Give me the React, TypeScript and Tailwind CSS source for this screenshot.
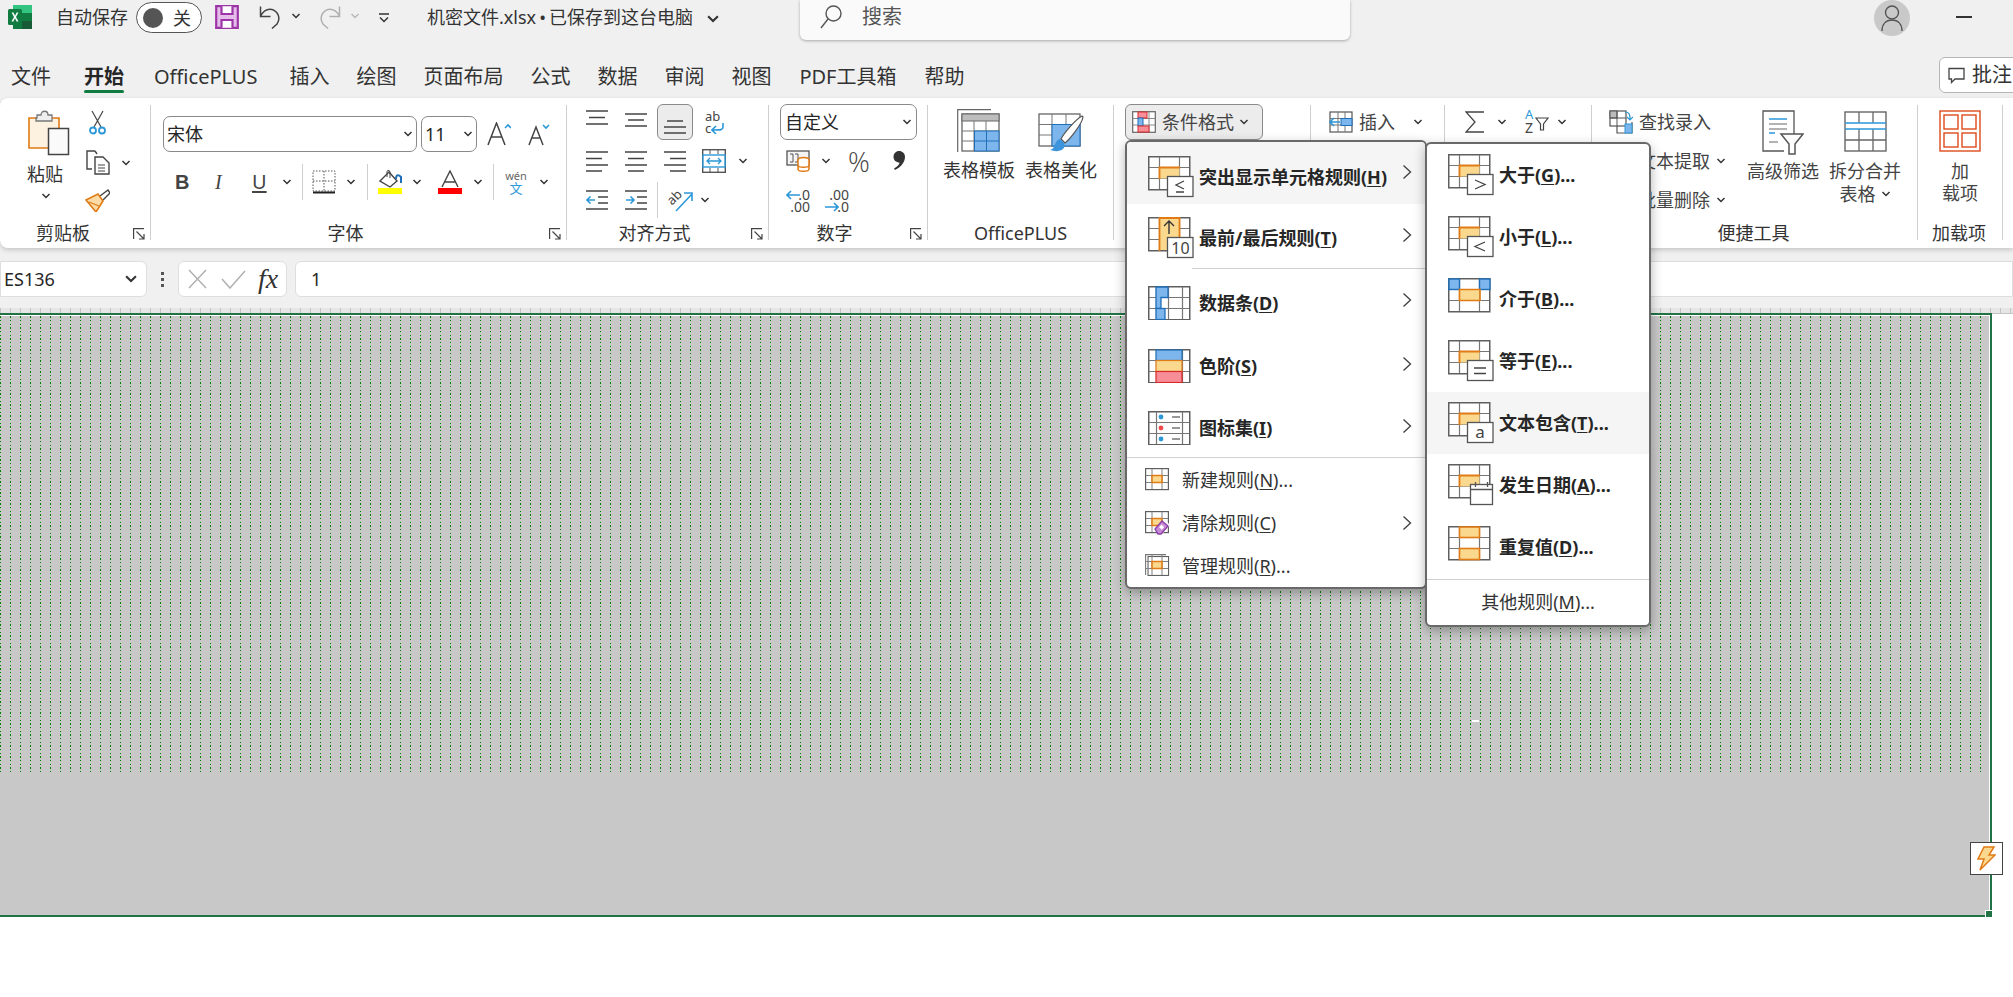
import type { ReactNode } from 'react'

const FONT = "font-['Noto_Sans','Noto_Sans_CJK_SC',sans-serif]"

// --- small shared bits ---
function Chev({ className = '', size = 8, color = '#333' }: { className?: string; size?: number; color?: string }) {
  return (
    <svg className={`shrink-0 ${className}`} width={size + 2} height={size} viewBox="0 0 10 8" fill="none">
      <path d="M1.5 2 5 5.5 8.5 2" stroke={color} strokeWidth="1.5" />
    </svg>
  )
}

function Launcher({ className = '' }: { className?: string }) {
  return (
    <svg className={className} width="12" height="12" viewBox="0 0 12 12" fill="none" stroke="#444" strokeWidth="1.2">
      <path d="M11 .6H.6V11" />
      <path d="M3.5 3.5 11 11M11 6v5H6" />
    </svg>
  )
}

function Sep({ className = '' }: { className?: string }) {
  return <div className={`w-px bg-[#cfcfcf] shrink-0 ${className}`} />
}

function GroupLabel({ children, launcher }: { children: ReactNode; launcher?: boolean }) {
  return (
    <div className="relative h-[18px] flex items-start justify-center text-[18px] leading-[22px] text-[#333] whitespace-nowrap">
      {children}
      {launcher && <Launcher className="absolute right-[5px] bottom-0" />}
    </div>
  )
}

function Lines({ kind }: { kind: 'top' | 'mid' | 'bottom' | 'left' | 'center' | 'right' | 'out' | 'in' }) {
  if (kind === 'top' || kind === 'mid' || kind === 'bottom') {
    const d = kind === 'top' ? 'M0 1H22M3 7.5H19M0 14H22' : kind === 'mid' ? 'M0 4H22M3 10H19M0 16H22' : 'M3 5H19M0 11H22M0 17H22'
    return (
      <svg width="22" height="20" viewBox="0 0 22 20" stroke="#444" strokeWidth="1.4">
        <path d={d} />
      </svg>
    )
  }
  if (kind === 'out' || kind === 'in') {
    return (
      <svg width="22" height="20" viewBox="0 0 22 20" fill="none">
        <path d="M0 1H22M12 7H22M12 13H22M0 19H22" stroke="#444" strokeWidth="1.4" />
        <path d={kind === 'out' ? 'M9 10H1M4.5 6.5 1 10l3.5 3.5' : 'M1 10H9M5.5 6.5 9 10l-3.5 3.5'} stroke="#2d98d8" strokeWidth="1.6" />
      </svg>
    )
  }
  const d =
    kind === 'left'
      ? 'M0 1H22M0 7.5H16M0 14H22M0 20H16'
      : kind === 'center'
        ? 'M0 1H22M3 7.5H19M0 14H22M3 20H19'
        : 'M0 1H22M6 7.5H22M0 14H22M6 20H22'
  return (
    <svg width="22" height="21" viewBox="0 0 22 21" stroke="#444" strokeWidth="1.4">
      <path d={d} />
    </svg>
  )
}

// --- grid icons of the conditional format menu ---
const ORANGE = '#e07b16'
const AMBER = '#fad98f'
const BLUE = '#7db6ec'
const DEEPBLUE = '#1f6fb8'

function CfIcon({ children }: { children: ReactNode }) {
  return (
    <svg className="shrink-0" width="46" height="42" viewBox="0 0 46 42" fill="none">
      {children}
    </svg>
  )
}

function Grid({ cols = 'M11.5 1V33M31.5 1V33' }: { cols?: string }) {
  return (
    <>
      <rect x=".75" y=".75" width="41" height="33" fill="#fff" stroke="#5f5f5f" strokeWidth="1.5" />
      <path d={`${cols}M1 11.5H41M1 22.5H41`} stroke="#767676" strokeWidth="1.2" />
    </>
  )
}

function Cell() {
  return (
    <>
      <rect x="11.5" y="11.5" width="20" height="11" fill={AMBER} />
      <path d="M11.5 23V11.5H32" stroke={ORANGE} strokeWidth="1.8" />
    </>
  )
}

function Badge({ children }: { children: ReactNode }) {
  return (
    <>
      <rect x="19.5" y="20.5" width="25.5" height="20" fill="#fff" stroke="#555" strokeWidth="1.3" />
      {children}
    </>
  )
}

function GreaterIcon() {
  return (
    <CfIcon>
      <Grid />
      <Cell />
      <Badge>
        <path d="M27 26 37 30.5 27 35" stroke="#444" strokeWidth="1.3" />
      </Badge>
    </CfIcon>
  )
}
function LessIcon({ eq }: { eq?: boolean }) {
  return (
    <CfIcon>
      <Grid />
      <Cell />
      <Badge>
        {eq ? (
          <path d="M36 25 28 29 36 33M28 36H36" stroke="#444" strokeWidth="1.3" />
        ) : (
          <path d="M37 26 27 30.5 37 35" stroke="#444" strokeWidth="1.3" />
        )}
      </Badge>
    </CfIcon>
  )
}
function BetweenIcon() {
  return (
    <CfIcon>
      <Grid />
      <rect x="1" y="1" width="10.5" height="10.5" fill={BLUE} stroke={DEEPBLUE} strokeWidth="1.4" />
      <rect x="31.5" y="1" width="10.5" height="10.5" fill={BLUE} stroke={DEEPBLUE} strokeWidth="1.4" />
      <rect x="11.5" y="11.5" width="20" height="11" fill={AMBER} />
      <path d="M11.5 23V11.5H32V23M11 22.5H32" stroke={ORANGE} strokeWidth="1.6" />
    </CfIcon>
  )
}
function EqualIcon() {
  return (
    <CfIcon>
      <Grid />
      <Cell />
      <Badge>
        <path d="M26 28H38M26 33.5H38" stroke="#444" strokeWidth="1.3" />
      </Badge>
    </CfIcon>
  )
}
function TextIcon() {
  return (
    <CfIcon>
      <Grid />
      <Cell />
      <Badge>
        <text x="32" y="36" textAnchor="middle" fontSize="17" fontFamily="Noto Sans" fill="#444">a</text>
      </Badge>
    </CfIcon>
  )
}
function DateIcon() {
  return (
    <CfIcon>
      <Grid />
      <Cell />
      <rect x="22.5" y="20.5" width="22" height="20" fill="#fff" stroke="#555" strokeWidth="1.3" />
      <path d="M23 25.5H44M27.5 18V23M39.5 18V23" stroke="#555" strokeWidth="1.3" />
    </CfIcon>
  )
}
function DupIcon() {
  return (
    <CfIcon>
      <Grid />
      <rect x="11.5" y="1" width="20" height="10.5" fill={AMBER} stroke={ORANGE} strokeWidth="1.6" />
      <rect x="11.5" y="22.5" width="20" height="11" fill={AMBER} stroke={ORANGE} strokeWidth="1.6" />
    </CfIcon>
  )
}
function TopIcon() {
  return (
    <CfIcon>
      <Grid />
      <rect x="11.5" y="1" width="20" height="32" fill={AMBER} />
      <path d="M11.5 34V1H31.5V21" stroke={ORANGE} strokeWidth="1.8" />
      <path d="M21 17V4M16 9 21 4l5 5" stroke="#333" strokeWidth="1.4" />
      <Badge>
        <text x="32.5" y="36.5" textAnchor="middle" fontSize="16" fontFamily="Noto Sans" fill="#444">10</text>
      </Badge>
    </CfIcon>
  )
}
function BarIcon() {
  return (
    <svg className="shrink-0" width="46" height="34" viewBox="0 0 46 34" fill="none">
      <Grid cols="M8.5 1V33M20.5 1V33M34.5 1V33" />
      <path d="M8 1H20V11.5H13V22.5H8Z" fill={BLUE} stroke={DEEPBLUE} strokeWidth="1.3" />
      <rect x="8" y="22.5" width="9" height="11" fill={BLUE} stroke={DEEPBLUE} strokeWidth="1.3" />
    </svg>
  )
}
function ScaleIcon() {
  return (
    <svg className="shrink-0" width="46" height="34" viewBox="0 0 46 34" fill="none">
      <Grid cols="M8.5 1V33M34.5 1V33" />
      <rect x="8" y="1" width="26" height="10.5" fill={BLUE} stroke={DEEPBLUE} strokeWidth="1.2" />
      <rect x="8" y="11.5" width="26" height="11" fill={AMBER} stroke={ORANGE} strokeWidth="1.2" />
      <rect x="8" y="22.5" width="26" height="11" fill="#f78d97" stroke="#d92b2b" strokeWidth="1.2" />
    </svg>
  )
}
function IconSetIcon() {
  return (
    <svg className="shrink-0" width="46" height="34" viewBox="0 0 46 34" fill="none">
      <Grid cols="M8.5 1V33M34.5 1V33" />
      <circle cx="13" cy="6" r="2.4" fill="#2d98d8" />
      <circle cx="13" cy="17" r="2.4" fill="#f04b4b" />
      <circle cx="13" cy="28" r="2.4" fill="#2d98d8" />
      <path d="M24 6H32M24 17H32M24 28H32" stroke="#777" strokeWidth="1.4" />
    </svg>
  )
}
function MiniGrid({ kind }: { kind: 'new' | 'clear' | 'manage' }) {
  return (
    <svg className="shrink-0" width="25" height="24" viewBox="0 0 25 24" fill="none">
      {kind === 'manage' && <path d="M.6 21V.6H21" stroke="#777" strokeWidth="1.1" />}
      <rect x=".6" y=".6" width="22.8" height="21" fill="#fff" stroke="#5f5f5f" strokeWidth="1.2" transform={kind === 'manage' ? 'translate(2.5 2) scale(.9)' : undefined} />
      <path d="M7 1V21M17 1V21M1 7.5H23M1 14.5H23" stroke="#808080" />
      <rect x="7" y="7.5" width="10" height="7" fill={AMBER} stroke={ORANGE} strokeWidth="1.5" />
      {kind === 'clear' && (
        <>
          <path d="M13 17 20 9l5 5-7 8h-3Z" fill="#fff" />
          <path d="M10 18 17 10l6 5-7 8h-3Z" fill="#c789d6" stroke="#8c3fa6" strokeWidth="1.3" />
          <rect x="15" y="14.5" width="3.6" height="3.6" fill="#fff" transform="rotate(40 17 16)" />
        </>
      )}
    </svg>
  )
}

function MenuChev({ className = '' }: { className?: string }) {
  return (
    <svg className={`shrink-0 ${className}`} width="10" height="16" viewBox="0 0 10 16" fill="none">
      <path d="M1.5 1.5 8.5 8l-7 6.5" stroke="#444" strokeWidth="1.4" />
    </svg>
  )
}

function Key({ label, k, after = ')' }: { label: string; k: string; after?: string }) {
  return (
    <span>
      {label}(<span className="underline underline-offset-2">{k}</span>{after}
    </span>
  )
}

function BigRow({ icon, label, k, hl = false, h, pt }: { icon: ReactNode; label: string; k: string; hl?: boolean; h: string; pt: string }) {
  return (
    <div className={`${h} flex items-center pl-[21px] pr-[13px] ${hl ? 'bg-[#f5f5f5]' : ''}`}>
      <div className={`flex-1 flex items-center ${pt}`}>
        <div className="w-[51px] flex items-center shrink-0">{icon}</div>
        <div className="text-[18px] font-bold text-[#262626] leading-[24px] whitespace-nowrap">
          <Key label={label} k={k} />
        </div>
      </div>
      <MenuChev className="-mt-[3px]" />
    </div>
  )
}

function SmallRow({ icon, label, k, arrow }: { icon: ReactNode; label: string; k: string; arrow?: boolean }) {
  return (
    <div className="h-[43px] flex items-center pl-[18px] pr-[13px]">
      <div className="w-[37px] shrink-0 flex">{icon}</div>
      <div className="flex-1 text-[18px] text-[#333] leading-[24px] whitespace-nowrap">
        <Key label={label} k={k} after={arrow ? ')' : ')...'} />
      </div>
      {arrow && <MenuChev />}
    </div>
  )
}

function SubRow({ icon, label, k, hl }: { icon: ReactNode; label: string; k: string; hl?: boolean }) {
  return (
    <div className={`h-[62px] flex items-center pl-[21px] ${hl ? 'bg-[#f5f5f5]' : ''}`}>
      <div className="w-[51px] shrink-0 flex">{icon}</div>
      <div className="text-[18px] font-bold text-[#262626] leading-[24px] whitespace-nowrap">
        <Key label={label} k={k} after=")..." />
      </div>
    </div>
  )
}

function TitleBar() {
  return (
    <div className="h-[47px] flex items-start relative">
      <div className="pl-[8px] pt-[5px] w-[56px] shrink-0">
        <svg width="24" height="24" viewBox="0 0 24 24">
          <rect x="5" y="0" width="19" height="8" fill="#33c481" />
          <rect x="5" y="8" width="19" height="8" fill="#21a366" />
          <rect x="5" y="16" width="19" height="8" fill="#107c41" />
          <rect x="14" y="8" width="10" height="8" fill="#107c41" />
          <rect x="14" y="16" width="10" height="8" fill="#185c37" />
          <rect x="0" y="4" width="14" height="16" rx="1.5" fill="#107c41" />
          <path d="M3.6 7.5 6 12l-2.5 4.6h1.8L7 13.3l1.6 3.3h1.9L8 12l2.4-4.5H8.7L7 10.8 5.4 7.5Z" fill="#fff" />
        </svg>
      </div>
      <div className="mt-[5px] text-[18px] leading-[24px] text-[#333] whitespace-nowrap w-[80px] shrink-0">自动保存</div>
      <div className="mt-[2px] w-[66px] h-[31px] rounded-full border border-[#555] bg-white flex items-center pl-[6px] gap-[10px] shrink-0">
        <div className="w-[20px] h-[20px] rounded-full bg-[#555]" />
        <span className="text-[18px] text-[#333] leading-none">关</span>
      </div>
      <div className="ml-[13px] mt-[5px] shrink-0">
        <svg width="24" height="24" viewBox="0 0 24 24" fill="#e6bdea" stroke="#9d35a8" strokeWidth="2.2">
          <path d="M1.2 1.2H22.8V22.8H1.2Z" />
          <path d="M6.5 1.2V9H17.5V1.2M6.5 22.8V15H17.5V22.8" fill="#fff" />
        </svg>
      </div>
      <div className="ml-[20px] mt-[5px] flex items-center gap-[9px] shrink-0">
        <svg width="23" height="24" viewBox="0 0 23 24" fill="none" stroke="#444" strokeWidth="1.5">
          <path d="M1.5 1.5V11.5H11.5M1.5 11C5 5 9 3.5 13 4.5 19 6.5 22 13 18 19L13 23.5" />
        </svg>
        <Chev className="-mt-[3px]" />
      </div>
      <div className="ml-[17px] mt-[5px] flex items-center gap-[9px] shrink-0">
        <svg width="23" height="24" viewBox="0 0 23 24" fill="none" stroke="#b0b0b0" strokeWidth="1.5">
          <path d="M21.5 1.5V11.5H11.5M21.5 11C18 5 14 3.5 10 4.5 4 6.5 1 13 5 19L10 23.5" />
        </svg>
        <Chev className="-mt-[3px]" color="#b8b8b8" />
      </div>
      <div className="ml-[18px] mt-[13px] shrink-0">
        <svg width="12" height="10" viewBox="0 0 12 10" fill="none" stroke="#333" strokeWidth="1.4">
          <path d="M1 1H11M2 4.5 6 8.5 10 4.5" />
        </svg>
      </div>
      <div className="ml-[37px] mt-[5px] text-[18px] leading-[24px] text-[#333] whitespace-nowrap w-[273px] shrink-0">
        机密文件.xlsx<span className="mx-[3px]">•</span>已保存到这台电脑
      </div>
      <Chev className="mt-[13px] ml-[6px]" size={12} />
      <div className="ml-[80px] w-[550px] h-[40px] pb-[6px] bg-[#fafafa] rounded-b-[6px] shadow-[0_1px_3px_rgba(0,0,0,0.3)] flex items-center pl-[20px] gap-[20px] shrink-0">
        <svg width="22" height="24" viewBox="0 0 22 24" fill="none" stroke="#555" strokeWidth="1.4">
          <circle cx="13.5" cy="8.5" r="7.5" />
          <path d="M8 14 1 23" />
        </svg>
        <span className="text-[20px] leading-none text-[#555]">搜索</span>
      </div>
      <div className="ml-auto flex items-start">
        <div className="w-[36px] h-[36px] rounded-full bg-[#c9c9c9] flex items-center justify-center">
          <svg width="22" height="28" viewBox="0 0 22 28" fill="none" stroke="#555" strokeWidth="1.4">
            <circle cx="11" cy="8.5" r="6.5" />
            <path d="M1 27C1 20 5 16 11 16S21 20 21 27" />
          </svg>
        </div>
        <div className="ml-[46px] mr-[41px] mt-[16px] w-[16px] h-[1.5px] bg-[#333]" />
      </div>
    </div>
  )
}

function TabBar() {
  const tabs = [
    { t: '文件', m: 'ml-0' },
    { t: '开始', m: 'ml-[33px]' },
    { t: 'OfficePLUS', m: 'ml-[30px]' },
    { t: '插入', m: 'ml-[32px]' },
    { t: '绘图', m: 'ml-[27px]' },
    { t: '页面布局', m: 'ml-[27px]' },
    { t: '公式', m: 'ml-[27px]' },
    { t: '数据', m: 'ml-[27px]' },
    { t: '审阅', m: 'ml-[27px]' },
    { t: '视图', m: 'ml-[27px]' },
    { t: 'PDF工具箱', m: 'ml-[28px]' },
    { t: '帮助', m: 'ml-[28px]' },
  ]
  return (
    <div className="h-[51px] flex items-start">
      <div className="flex pl-[11px] pt-[16px] text-[20px] leading-[28px] text-[#333] whitespace-nowrap">
        {tabs.map(({ t, m }) => (
          <div key={t} className={`relative ${m} ${t === '开始' ? 'font-bold text-[#262626]' : ''}`}>
            {t}
            {t === '开始' && <div className="absolute left-0 right-0 -bottom-[2px] h-[3px] rounded-full bg-[#107c41]" />}
          </div>
        ))}
      </div>
      <div className="ml-auto mt-[10px] w-[80px] -mr-[6px] h-[36px] bg-white border border-[#b5b5b5] rounded-[6px] flex items-center pl-[8px] gap-[7px]">
        <svg width="17" height="17" viewBox="0 0 17 17" fill="none" stroke="#444" strokeWidth="1.3">
          <path d="M1 1.5H16V12H7L3.5 15.5V12H1Z" />
        </svg>
        <span className="text-[20px] text-[#333] leading-none whitespace-nowrap">批注</span>
      </div>
    </div>
  )
}

function ClipboardGroup() {
  return (
    <div className="w-[150px] shrink-0 flex flex-col">
      <div className="flex-1 flex">
        <div className="w-[85px] pl-[27px] pt-[5px] shrink-0 flex flex-col">
          <svg className="ml-[1px]" width="42" height="46" viewBox="0 0 42 46" fill="none">
            <path d="M1 8H31V38H1Z" fill="#fdf2df" stroke={ORANGE} strokeWidth="1.6" />
            <path d="M9 8V5H13C13 0 20 0 20 5H24V11H8V8Z" fill="#eee" stroke="#777" strokeWidth="1.3" />
            <rect x="20.5" y="18.5" width="20" height="26" fill="#fafafa" stroke="#444" strokeWidth="1.5" />
          </svg>
          <span className="text-[18px] text-[#333] leading-[24px] mt-[6px]">粘贴</span>
          <Chev className="ml-[14px] mt-[6px]" />
        </div>
        <div className="flex flex-col pt-[5px] shrink-0">
          <svg className="ml-[4px]" width="17" height="25" viewBox="0 0 17 25" fill="none">
            <path d="M3 1 12 17M14 1 5 17" stroke="#444" strokeWidth="1.2" />
            <circle cx="4" cy="20.5" r="3" stroke="#2d98d8" strokeWidth="1.8" />
            <circle cx="13" cy="20.5" r="3" stroke="#2d98d8" strokeWidth="1.8" />
          </svg>
          <div className="flex items-center mt-[15px] gap-[11px]">
            <svg width="25" height="25" viewBox="0 0 25 25" fill="none" stroke="#444" strokeWidth="1.4">
              <path d="M10 1H2V19H7" />
              <path d="M10 1 12 4M10 7H18L24 13V24H10Z" fill="#fff" />
              <path d="M13 15H20M13 18H20M13 21H20" strokeWidth="1" />
            </svg>
            <Chev />
          </div>
          <svg className="mt-[14px]" width="25" height="23" viewBox="0 0 25 23" fill="none">
            <path d="M15 7 23 1l2 3-7 7" fill="#fff" stroke="#444" strokeWidth="1.4" />
            <path d="M1 11 13 5 18 12 11 23Z" fill="#fbdca6" stroke={ORANGE} strokeWidth="1.6" />
            <path d="M4 13 14 17" stroke={ORANGE} strokeWidth="1.2" />
          </svg>
        </div>
      </div>
      <GroupLabel launcher>
        <span className="-ml-[24px]">剪贴板</span>
      </GroupLabel>
    </div>
  )
}

function FontGroup() {
  const chev = <Chev />
  return (
    <div className="w-[415px] shrink-0 flex flex-col">
      <div className="flex-1 flex flex-col">
        <div className="flex items-center pl-[12px] pt-[11px]">
          <div className="w-[254px] h-[36px] border border-[#8a8a8a] rounded-[7px] flex items-center pl-[3px] pr-[3px] justify-between">
            <span className="text-[18px] leading-none text-[#262626]">宋体</span>
            {chev}
          </div>
          <div className="ml-[4px] w-[56px] h-[36px] border border-[#8a8a8a] rounded-[7px] flex items-center pl-[3px] pr-[3px] justify-between">
            <span className="text-[18px] leading-none text-[#262626]">11</span>
            {chev}
          </div>
          <svg className="ml-[10px]" width="24" height="24" viewBox="0 0 24 24" fill="none">
            <path d="M1 23 9.5 1 18 23M4 15H15" stroke="#444" strokeWidth="1.5" />
            <path d="M18 6 21 3l3 3" stroke="#2d98d8" strokeWidth="1.6" />
          </svg>
          <svg className="ml-[17px]" width="22" height="24" viewBox="0 0 22 24" fill="none">
            <path d="M1 23 8 5 15 23M3.5 16H12.5" stroke="#444" strokeWidth="1.5" />
            <path d="M15 3 18 6l3-3" stroke="#2d98d8" strokeWidth="1.6" />
          </svg>
        </div>
        <div className="flex items-center pl-[24px] mt-[12px] h-[36px] text-[#444]">
          <span className="w-[40px] font-bold text-[20px] leading-none font-['Liberation_Sans',sans-serif]">B</span>
          <span className="w-[37px] italic text-[20px] leading-none font-['Liberation_Serif',serif]">I</span>
          <span className="w-[30px] underline underline-offset-2 text-[20px] leading-none">U</span>
          {chev}
          <Sep className="ml-[10px] h-[36px]" />
          <svg className="ml-[9px]" width="24" height="24" viewBox="0 0 24 24" fill="none">
            <path d="M1 1H23V21H1ZM12 1V21M1 11H23" stroke="#555" strokeWidth="1" strokeDasharray="1.5 1.5" />
            <path d="M1 22.5H23" stroke="#222" strokeWidth="2" />
          </svg>
          <Chev className="ml-[10px]" />
          <Sep className="ml-[11px] h-[36px]" />
          <div className="ml-[10px] w-[24px] flex flex-col">
            <svg width="24" height="18" viewBox="0 0 24 18" fill="none">
              <path d="M2 11 11 2 19 11 12 17Z" fill="#fff" stroke="#444" strokeWidth="1.4" />
              <path d="M9 7V1.5C9 0 12 0 12 2V8" stroke="#444" />
              <path d="M18 9C18 5 20 4 23 7V13" stroke="#1f6fb8" strokeWidth="2" />
            </svg>
            <div className="h-[6px] bg-[#ffff00]" />
          </div>
          <Chev className="ml-[10px]" />
          <div className="ml-[16px] w-[24px] flex flex-col items-center">
            <svg width="20" height="18" viewBox="0 0 20 18" fill="none">
              <path d="M2 17 10 1l8 16M5 12H15" stroke="#444" strokeWidth="1.4" />
            </svg>
            <div className="h-[6px] w-[24px] bg-[#ff0000]" />
          </div>
          <Chev className="ml-[11px]" />
          <Sep className="ml-[10px] h-[36px]" />
          <div className="ml-[11px] w-[22px] flex flex-col items-center">
            <span className="text-[11px] leading-[13px] text-[#666]">wén</span>
            <span className="text-[13px] leading-[13px] text-[#2d98d8]">文</span>
          </div>
          <Chev className="ml-[12px]" />
        </div>
      </div>
      <GroupLabel launcher>
        <span className="-ml-[26px]">字体</span>
      </GroupLabel>
    </div>
  )
}

function AlignGroup() {
  return (
    <div className="w-[201px] shrink-0 flex flex-col">
      <div className="flex-1 flex flex-col pl-[19px]">
        <div className="flex items-center h-[36px] -mt-[1px]">
          <div className="w-[39px] -mt-[5px]"><Lines kind="top" /></div>
          <div className="w-[32px] -mt-[4px]"><Lines kind="mid" /></div>
          <div className="w-[36px] h-[36px] border border-[#8a8a8a] bg-[#ececec] rounded-[6px] flex items-center justify-center pt-[8px]">
            <Lines kind="bottom" />
          </div>
          <div className="ml-[12px] w-[24px] text-[13px] leading-[12px] text-[#444]">
            <div>ab</div>
            <div className="flex items-center">
              c
              <svg width="13" height="11" viewBox="0 0 13 11" fill="none" stroke="#2d98d8" strokeWidth="1.6">
                <path d="M12 0V4C12 7 10 7 2 7M5 3 1 7l4 4" />
              </svg>
            </div>
          </div>
        </div>
        <div className="flex items-center h-[24px] mt-[9px]">
          <div className="w-[39px]"><Lines kind="left" /></div>
          <div className="w-[39px]"><Lines kind="center" /></div>
          <div className="w-[38px]"><Lines kind="right" /></div>
          <svg width="24" height="24" viewBox="0 0 24 24" fill="none">
            <rect x=".7" y=".7" width="22.6" height="22.6" stroke="#555" strokeWidth="1.4" />
            <rect x="1" y="6" width="22" height="12" fill="#fff" stroke="#2d98d8" strokeWidth="1.4" />
            <path d="M5 12H19M8 9 5 12l3 3M16 9l3 3-3 3" stroke="#2d98d8" strokeWidth="1.3" />
            <path d="M8 1V5M16 1V5M8 19V23M16 19V23" stroke="#555" />
          </svg>
          <Chev className="ml-[12px]" />
        </div>
        <div className="flex items-center h-[36px] mt-[9px]">
          <div className="w-[39px] -mt-[1px]"><Lines kind="out" /></div>
          <div className="w-[32px] -mt-[1px]"><Lines kind="in" /></div>
          <Sep className="h-[36px]" />
          <svg className="ml-[9px] overflow-visible" width="26" height="24" viewBox="0 0 26 24" fill="none">
            <text x="9" y="13" fontSize="13" fontFamily="Noto Sans" fill="#444" transform="rotate(-45 9 11)" textAnchor="middle">ab</text>
            <path d="M9 23 25 6M17 5H25V13" stroke="#2d98d8" strokeWidth="1.6" />
          </svg>
          <Chev className="ml-[7px]" />
        </div>
      </div>
      <GroupLabel launcher>
        <span className="-ml-[26px]">对齐方式</span>
      </GroupLabel>
    </div>
  )
}

function NumberGroup() {
  return (
    <div className="w-[158px] shrink-0 flex flex-col">
      <div className="flex-1 flex flex-col pl-[11px]">
        <div className="-mt-[1px] w-[137px] h-[36px] border border-[#8a8a8a] rounded-[7px] flex items-center pl-[4px] pr-[4px] justify-between">
          <span className="text-[18px] leading-none text-[#262626]">自定义</span>
          <Chev />
        </div>
        <div className="flex items-center h-[28px] mt-[7px] pl-[6px]">
          <svg width="24" height="22" viewBox="0 0 24 22" fill="none">
            <rect x="1" y="1" width="22" height="14" fill="#f4f4f4" stroke="#555" strokeWidth="1.3" />
            <path d="M4 4H7V12H4M9 4H12V12H9" stroke="#555" />
            <ellipse cx="17.5" cy="10" rx="5.5" ry="2.5" fill="#fff" stroke={ORANGE} strokeWidth="1.5" />
            <path d="M12 10V19C12 22 23 22 23 19V10M12 15C12 18 23 18 23 15" fill="#fff" stroke={ORANGE} strokeWidth="1.5" />
          </svg>
          <Chev className="ml-[11px]" />
          <span className="ml-[17px] w-[45px] text-[27px] font-light leading-none text-[#444] font-['Open_Sans',sans-serif]">%</span>
          <svg className="-mt-[2px]" width="12" height="19" viewBox="0 0 12 19" fill="#333">
            <path d="M6 0C9.5 0 12 2.5 12 6 12 11 8 16 2 19L1 17.5C4.5 15.5 6.5 13.500 6.500 11.500 3 11.500 .5 9 .5 6 .5 2.500 3 0 6 0Z" />
          </svg>
        </div>
        <div className="flex items-center h-[26px] mt-[13px] pl-[6px] gap-[15px]">
          <div className="relative w-[24px] h-[24px] text-[14px] leading-[12px] text-[#444] text-right">
            <div>.0</div>
            <div>.00</div>
            <svg className="absolute left-0 top-[1px]" width="14" height="10" viewBox="0 0 14 10" fill="none" stroke="#2d98d8" strokeWidth="1.6">
              <path d="M14 5H1M5 1 1 5l4 4" />
            </svg>
          </div>
          <div className="relative w-[24px] h-[24px] text-[14px] leading-[12px] text-[#444] text-right">
            <div>.00</div>
            <div>.0</div>
            <svg className="absolute left-0 top-[13px]" width="14" height="10" viewBox="0 0 14 10" fill="none" stroke="#2d98d8" strokeWidth="1.6">
              <path d="M0 5H13M9 1l4 4-4 4" />
            </svg>
          </div>
        </div>
      </div>
      <GroupLabel launcher>
        <span className="-ml-[27px]">数字</span>
      </GroupLabel>
    </div>
  )
}

function OfficeGroup() {
  return (
    <div className="w-[185px] shrink-0 flex flex-col">
      <div className="flex-1 flex pl-[15px] pt-[4px] gap-[10px]">
        <div className="w-[72px] flex flex-col items-center">
          <svg width="44" height="44" viewBox="0 0 44 44" fill="none">
            <path d="M.7 43V.7H34" stroke="#666" strokeWidth="1.2" />
            <rect x="5" y="5" width="37" height="37" fill="#fff" stroke="#666" strokeWidth="1.3" />
            <rect x="5" y="5" width="37" height="7" fill="#bdbdbd" stroke="#666" />
            <path d="M17 12V42M29 12V42M5 22H42M5 32H42" stroke="#777" />
            <rect x="17.5" y="22" width="24.5" height="20" fill="#7db6ec" stroke="#1f6fb8" />
            <path d="M29.5 22V42M17.5 32H42" stroke="#1f6fb8" />
          </svg>
          <span className="text-[18px] text-[#333] leading-[24px] mt-[5px] whitespace-nowrap">表格模板</span>
        </div>
        <div className="w-[72px] flex flex-col items-center">
          <svg width="46" height="44" viewBox="0 0 46 44" fill="none">
            <rect x="1" y="5" width="41" height="32" fill="#fff" stroke="#666" strokeWidth="1.3" />
            <path d="M14 5V37M28 5V37M1 15.500H42M1 26H42" stroke="#777" />
            <rect x="14" y="15.500" width="28" height="21.500" fill="#7db6ec" stroke="#1f6fb8" />
            <path d="M44 7C38 10 26 24 23 30L27 34C32 30 44 15 45 8Z" fill="#fff" stroke="#555" strokeWidth="1.2" />
            <path d="M22 30C16 31 18 40 12 41 20 44 29 41 26 34Z" fill="#3c94dc" />
          </svg>
          <span className="text-[18px] text-[#333] leading-[24px] mt-[5px] whitespace-nowrap">表格美化</span>
        </div>
      </div>
      <GroupLabel>OfficePLUS</GroupLabel>
    </div>
  )
}

function StylesGroup() {
  return (
    <div className="w-[196px] shrink-0 pl-[11px]">
      <div className="-mt-[1px] w-[138px] h-[36px] border border-[#8a8a8a] bg-[#ececec] rounded-[6px] flex items-center pl-[6px]">
        <svg width="24" height="22" viewBox="0 0 24 22" fill="none">
          <rect x=".7" y=".7" width="22.6" height="20.6" fill="#fff" stroke="#666" strokeWidth="1.2" />
          <path d="M7 1V21M17 1V21M1 7.5H23M1 14H23" stroke="#888" />
          <rect x="6" y="1" width="9" height="6" fill="#f78d97" stroke="#d92b2b" />
          <rect x="6" y="7" width="5" height="8" fill="#7db6ec" stroke="#1f6fb8" />
          <rect x="6" y="15" width="11" height="6" fill="#f78d97" stroke="#d92b2b" />
        </svg>
        <span className="ml-[6px] text-[18px] leading-none text-[#444] whitespace-nowrap">条件格式</span>
        <Chev className="ml-[5px]" />
      </div>
    </div>
  )
}

function CellsGroup() {
  return (
    <div className="w-[133px] shrink-0 pt-[5px] pl-[18px] flex items-start">
      <div className="flex items-center h-[24px]">
        <svg width="24" height="22" viewBox="0 0 24 22" fill="none">
          <rect x="1" y="1" width="22" height="20" fill="#fff" stroke="#555" strokeWidth="1.2" />
          <path d="M9 1V21M16 1V21M1 7.5H23M1 14H23" stroke="#777" />
          <rect x="12" y="7.5" width="11" height="7" fill="#7db6ec" stroke="#1f6fb8" />
          <path d="M11 11H1M5 7 1 11l4 4" stroke="#2d98d8" strokeWidth="1.6" />
        </svg>
        <span className="ml-[6px] text-[18px] leading-none text-[#444]">插入</span>
        <Chev className="ml-[18px]" />
      </div>
    </div>
  )
}

function EditGroup() {
  return (
    <div className="w-[146px] shrink-0 pt-[5px] pl-[20px] flex items-start">
      <div className="flex items-center h-[24px]">
        <svg width="20" height="22" viewBox="0 0 20 22" fill="none" stroke="#444" strokeWidth="1.3">
          <path d="M19 1H1L10 11 1 21H19" />
        </svg>
        <Chev className="ml-[12px]" />
        <div className="ml-[18px] relative w-[24px] h-[24px]">
          <span className="absolute left-0 -top-[2px] text-[13px] leading-[13px] text-[#2d98d8]">A</span>
          <span className="absolute left-0 top-[11px] text-[14px] leading-[14px] text-[#444]">Z</span>
          <svg className="absolute right-0 top-[7px]" width="14" height="14" viewBox="0 0 14 14" fill="none" stroke="#444" strokeWidth="1.2">
            <path d="M1 1H13L8.500 7V13H5.500V7Z" />
          </svg>
        </div>
        <Chev className="ml-[8px]" />
      </div>
    </div>
  )
}

function ToolsGroup() {
  const btn = 'flex items-center h-[24px] text-[18px] leading-none text-[#444] whitespace-nowrap'
  return (
    <div className="w-[325px] shrink-0 flex flex-col">
      <div className="flex-1 flex">
        <div className="pl-[17px] pt-[5px] w-[155px] shrink-0 flex flex-col gap-[15px]">
          <div className={btn}>
            <svg width="24" height="24" viewBox="0 0 24 24" fill="none">
              <rect x="1" y="1" width="16" height="15" fill="#fff" stroke="#555" strokeWidth="1.2" />
              <rect x="1" y="1" width="7" height="7" fill="#bbb" stroke="#555" />
              <path d="M8 1V16M1 8H17" stroke="#555" />
              <path d="M8 16V23H23V12" stroke="#555" strokeWidth="1.2" />
              <rect x="16" y="14" width="7" height="9" fill="#7db6ec" stroke="#2d98d8" />
              <path d="M16 2C20 2 21 4 21 9M18 7l3 3 3-3" stroke="#2d98d8" strokeWidth="1.2" />
            </svg>
            <span className="ml-[6px]">查找录入</span>
          </div>
          <div className={`${btn} pl-[29px]`}>
            <span>文本提取</span>
            <Chev className="ml-[6px]" />
          </div>
          <div className={`${btn} pl-[29px]`}>
            <span>批量删除</span>
            <Chev className="ml-[6px]" />
          </div>
        </div>
        <div className="w-[72px] pt-[5px] shrink-0 flex flex-col items-center">
          <svg width="42" height="46" viewBox="0 0 42 46" fill="none">
            <path d="M32 30V1H1V41H22" fill="#fff" stroke="#555" strokeWidth="1.3" />
            <path d="M7 9H25M7 23H13" stroke="#2d98d8" strokeWidth="1.4" />
            <path d="M7 14H25M7 19H25M7 32H16" stroke="#999" strokeWidth="1.4" />
            <path d="M19 24H41L33 34V44H27V34Z" fill="#fff" stroke="#555" strokeWidth="1.5" />
          </svg>
          <span className="text-[18px] leading-[24px] text-[#444] mt-[3px] whitespace-nowrap">高级筛选</span>
        </div>
        <div className="ml-[10px] w-[72px] pt-[6px] shrink-0 flex flex-col items-center">
          <svg width="43" height="41" viewBox="0 0 43 41" fill="none">
            <rect x="1" y="1" width="41" height="39" fill="#fff" stroke="#666" strokeWidth="1.4" />
            <path d="M15 1V12M29 1V12M15 18V40M29 18V40M1 29H42" stroke="#666" strokeWidth="1.3" />
            <path d="M1 12H42M1 18H42" stroke="#2d98d8" strokeWidth="1.4" />
          </svg>
          <span className="text-[18px] leading-[24px] text-[#444] mt-[7px] whitespace-nowrap">拆分合并</span>
          <span className="flex items-center text-[18px] leading-[22px] text-[#444]">表格<Chev className="ml-[5px]" /></span>
        </div>
      </div>
      <GroupLabel><span className="-ml-[2px]">便捷工具</span></GroupLabel>
    </div>
  )
}

function AddinGroup() {
  return (
    <div className="w-[84px] shrink-0 flex flex-col">
      <div className="flex-1 flex flex-col items-center pt-[5px]">
        <svg width="42" height="42" viewBox="0 0 42 42" fill="none" stroke="#dd4b1c" strokeWidth="1.4">
          <rect x="1" y="1" width="40" height="40" />
          <rect x="5" y="5" width="14" height="14" />
          <rect x="23" y="5" width="14" height="14" />
          <rect x="5" y="23" width="14" height="14" />
          <rect x="23" y="23" width="14" height="14" />
        </svg>
        <span className="text-[18px] leading-[24px] text-[#444] mt-[7px]">加</span>
        <span className="text-[18px] leading-[21px] text-[#444]">载项</span>
      </div>
      <GroupLabel>
        <span className="-ml-[2px]">加载项</span>
      </GroupLabel>
    </div>
  )
}

function Ribbon() {
  return (
    <div className="h-[150px] bg-white rounded-l-[8px] shadow-[0_2px_5px_rgba(0,0,0,0.18)] flex pt-[7px] pb-[8px]">
      <ClipboardGroup />
      <Sep />
      <FontGroup />
      <Sep />
      <AlignGroup />
      <Sep />
      <NumberGroup />
      <Sep />
      <OfficeGroup />
      <Sep />
      <StylesGroup />
      <Sep />
      <CellsGroup />
      <Sep />
      <EditGroup />
      <Sep />
      <ToolsGroup />
      <Sep />
      <AddinGroup />
      <Sep />
    </div>
  )
}

function FormulaBar() {
  return (
    <div className="h-[60px] pt-[13px] flex items-start">
      <div className="w-[147px] h-[36px] bg-white border border-[#dedede] rounded-r-[6px] flex items-center pl-[3px] pr-[8px] justify-between">
        <span className="text-[18px] leading-none text-[#262626]">ES136</span>
        <Chev size={12} />
      </div>
      <div className="w-[31px] flex flex-col items-center gap-[3px] pt-[11px]">
        <div className="w-[3px] h-[3px] bg-[#555]" />
        <div className="w-[3px] h-[3px] bg-[#555]" />
        <div className="w-[3px] h-[3px] bg-[#555]" />
      </div>
      <div className="w-[109px] h-[36px] bg-white border border-[#dedede] rounded-[6px] flex items-center pl-[9px]">
        <svg width="19" height="20" viewBox="0 0 19 20" fill="none" stroke="#b0b0b0" strokeWidth="1.5">
          <path d="M1 1 18 19M18 1 1 19" />
        </svg>
        <svg className="ml-[14px]" width="25" height="19" viewBox="0 0 25 19" fill="none" stroke="#b0b0b0" strokeWidth="1.5">
          <path d="M1 9 9 18 24 1" />
        </svg>
        <span className="ml-[12px] italic text-[28px] leading-none text-[#333] font-['Liberation_Serif',serif]">fx</span>
      </div>
      <div className="ml-[8px] flex-1 h-[36px] bg-white border border-[#dedede] rounded-l-[6px] pl-[15px] flex items-center">
        <span className="text-[18px] leading-none text-[#262626]">1</span>
      </div>
    </div>
  )
}

function Sheet() {
  return (
    <div className="relative">
      <div className="h-[6px] bg-[#e6e6e6] bg-[linear-gradient(to_right,#c4c4c4_1px,transparent_1px)] bg-[length:10px_100%] border-b border-[#c4c4c4]" />
      <div className="-mt-[1px] relative w-[1992px] border-t-[2px] border-r-[2px] border-b-[2px] border-[#217346]">
        <div className="border-t border-r border-white h-[600px] bg-[#c8c8c8]">
          <div className="h-[459px] bg-[linear-gradient(to_right,transparent_1px,#c8c8c8_1px),linear-gradient(to_bottom,#008000_2px,#c8c8c8_2px,#c8c8c8_4px,#008000_4px,#008000_5px,#c8c8c8_5px,#c8c8c8_8px,#008000_8px,#008000_9px,#c8c8c8_9px)] bg-[length:10px_100%,100%_11px]" />
        </div>
      </div>
      {/* fill handle */}
      <div className="absolute left-[1985px] top-[602px] w-[8px] h-[8px] bg-[#217346] border border-white" />
      {/* quick analysis button */}
      <div className="absolute left-[1970px] top-[534px] w-[33px] h-[33px] bg-white border border-[#444] flex items-center justify-center">
        <svg width="19" height="25" viewBox="0 0 19 25" fill="none">
          <path d="M7 1H17L12 9H18L3 24 7 13H1Z" fill={AMBER} stroke={ORANGE} strokeWidth="1.5" />
        </svg>
      </div>
      <div className="absolute left-[1472px] top-[412px] w-[7px] h-[2px] bg-white" />
    </div>
  )
}

function CfMenu() {
  return (
    <>
      <div className="absolute left-[1125px] top-[140px] w-[302px] rounded-[6px] border-2 border-[#696969] bg-white shadow-[0_4px_12px_rgba(0,0,0,0.3)] overflow-hidden z-10">
        <BigRow h="h-[62px]" pt="pt-[8px]" hl icon={<LessIcon eq />} label="突出显示单元格规则" k="H" />
        <BigRow h="h-[64px]" pt="pt-[4px]" icon={<TopIcon />} label="最前/最后规则" k="T" />
        <div className="h-px bg-[#d0d0d0] ml-[65px]" />
        <BigRow h="h-[64px]" pt="pt-[4px]" icon={<BarIcon />} label="数据条" k="D" />
        <BigRow h="h-[64px]" pt="pt-[2px]" icon={<ScaleIcon />} label="色阶" k="S" />
        <BigRow h="h-[60px]" pt="pt-[2px]" icon={<IconSetIcon />} label="图标集" k="I" />
        <div className="h-px bg-[#d0d0d0]" />
        <SmallRow icon={<MiniGrid kind="new" />} label="新建规则" k="N" />
        <SmallRow icon={<MiniGrid kind="clear" />} label="清除规则" k="C" arrow />
        <SmallRow icon={<MiniGrid kind="manage" />} label="管理规则" k="R" />
      </div>
      <div className="absolute left-[1425px] top-[142px] w-[226px] rounded-[6px] border-2 border-[#696969] bg-white shadow-[0_4px_12px_rgba(0,0,0,0.3)] overflow-hidden z-20">
        <SubRow icon={<GreaterIcon />} label="大于" k="G" />
        <SubRow icon={<LessIcon />} label="小于" k="L" />
        <SubRow icon={<BetweenIcon />} label="介于" k="B" />
        <SubRow icon={<EqualIcon />} label="等于" k="E" />
        <SubRow hl icon={<TextIcon />} label="文本包含" k="T" />
        <SubRow icon={<DateIcon />} label="发生日期" k="A" />
        <SubRow icon={<DupIcon />} label="重复值" k="D" />
        <div className="h-px mt-px bg-[#d0d0d0]" />
        <div className="h-[45px] flex items-center justify-center text-[18px] text-[#333]">
          <Key label="其他规则" k="M" after=")..." />
        </div>
      </div>
    </>
  )
}

export default function App() {
  return (
    <div className={`relative w-[2013px] h-[997px] bg-white overflow-hidden ${FONT}`}>
      <div className="bg-[#f0f0f0]">
        <TitleBar />
        <TabBar />
        <Ribbon />
        <FormulaBar />
      </div>
      <Sheet />
      <CfMenu />
    </div>
  )
}
